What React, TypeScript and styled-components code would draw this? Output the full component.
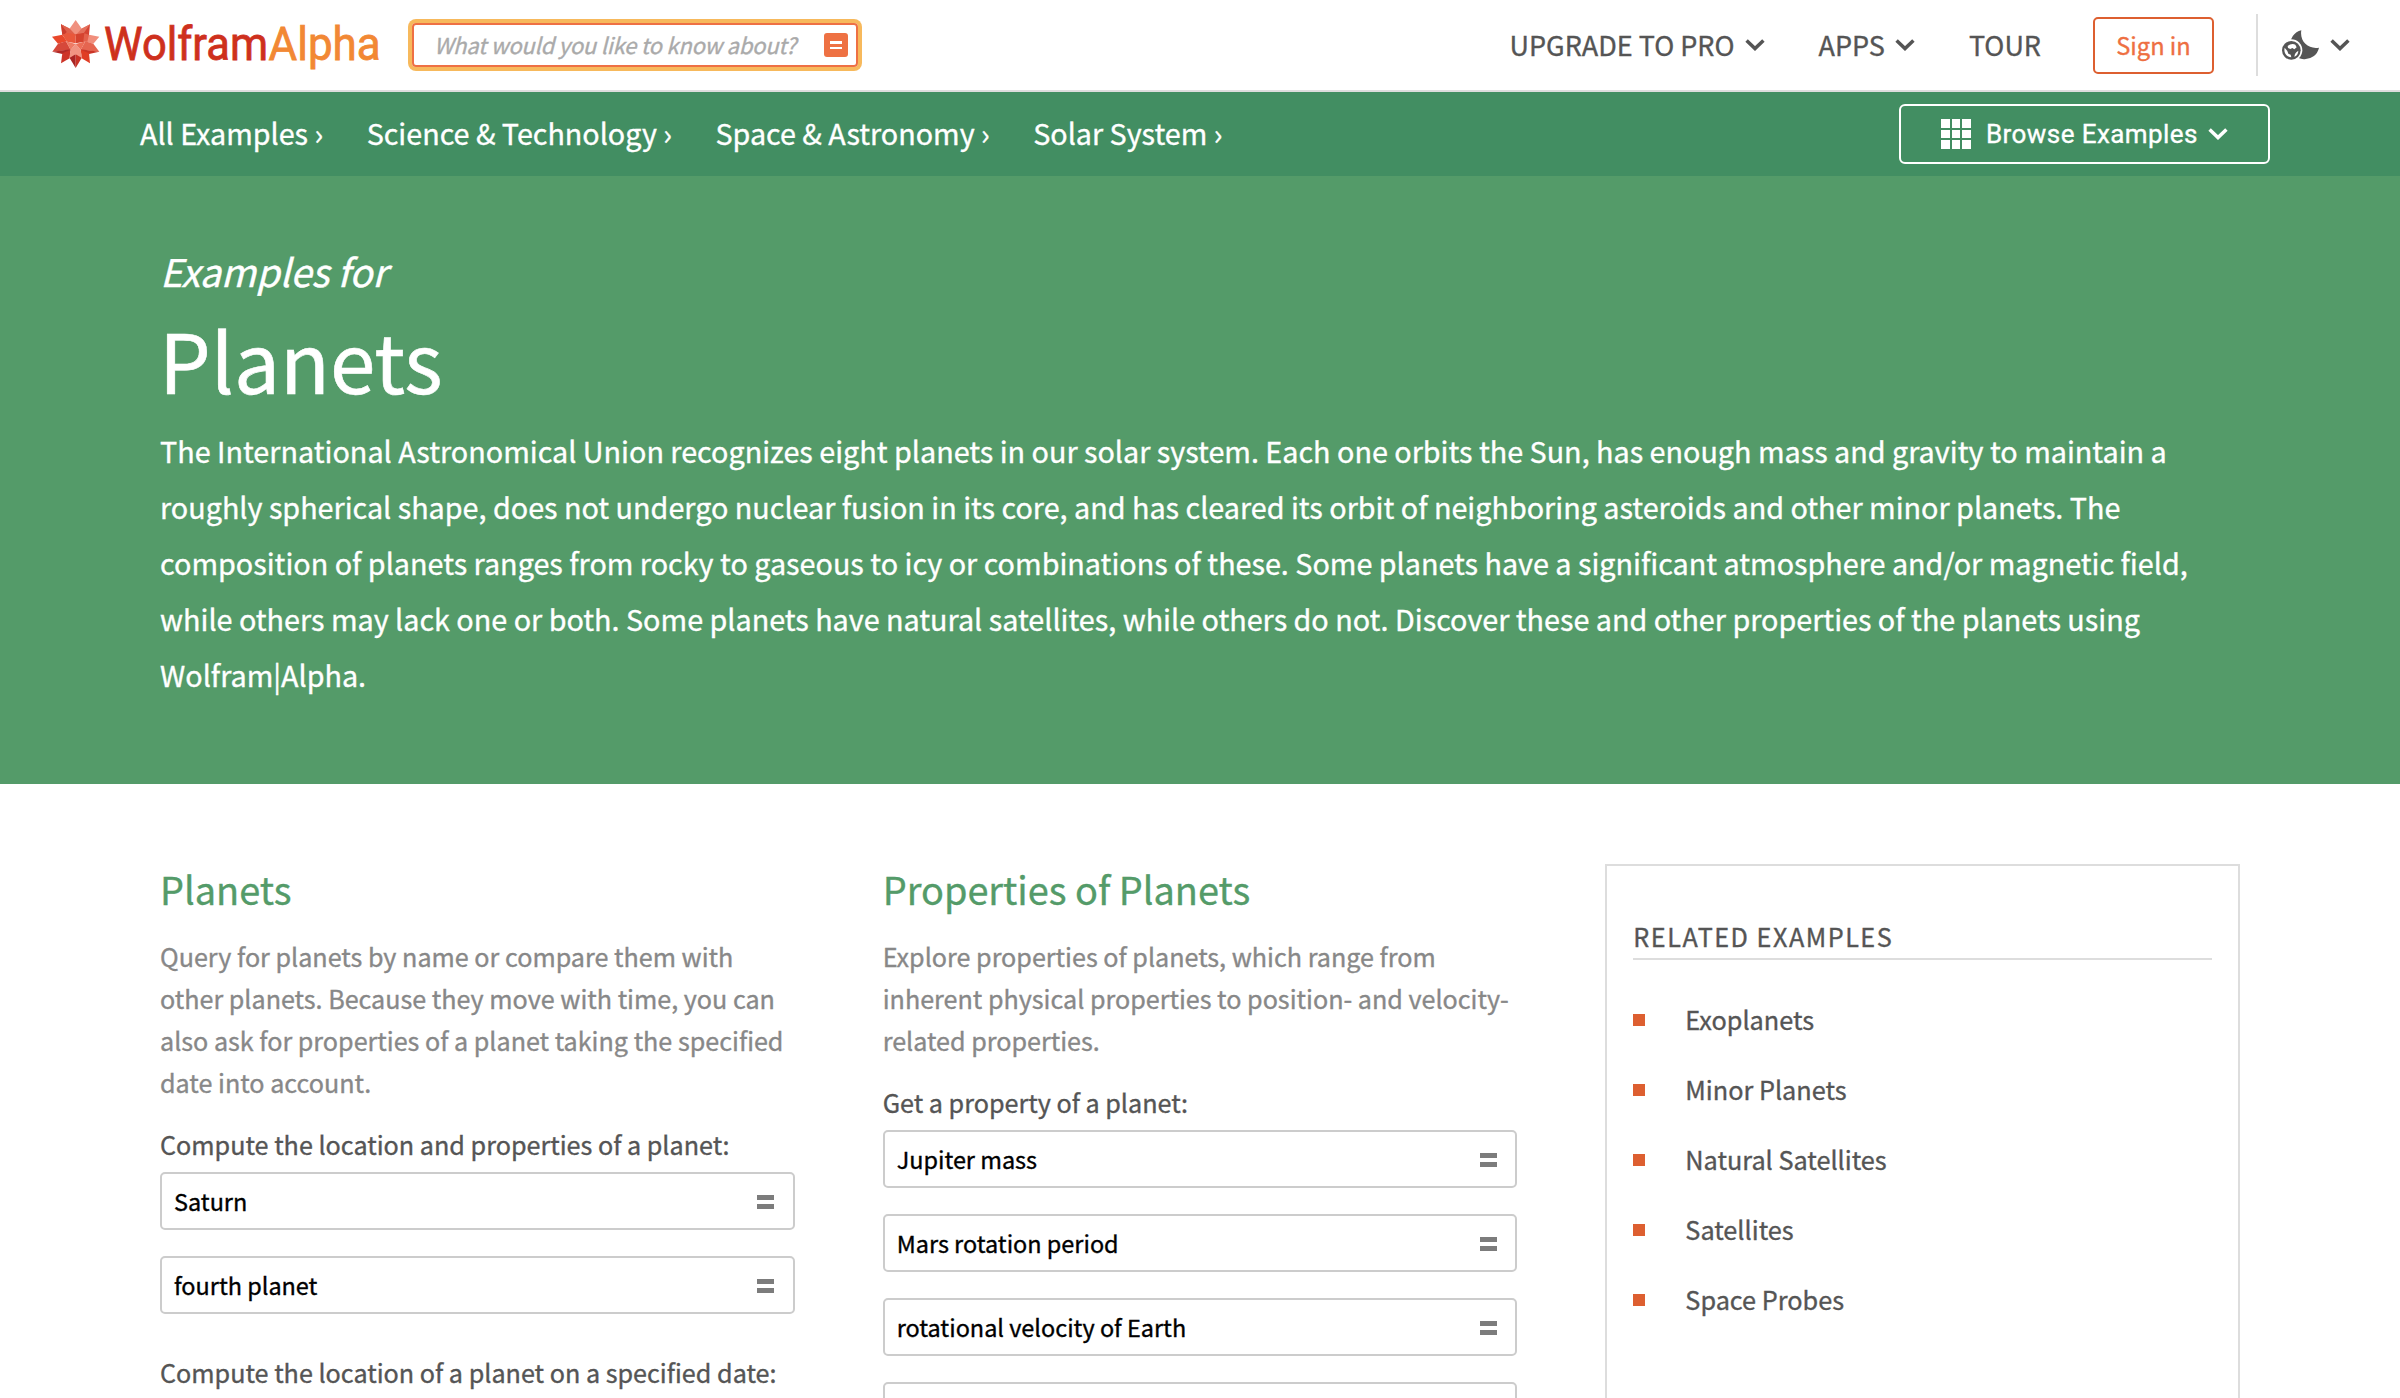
import React from 'react';
import styled, { createGlobalStyle } from 'styled-components';

const sans = '"Noto Sans CJK SC", "Noto Sans", sans-serif';

const GlobalStyle = createGlobalStyle`
  *, *::before, *::after { box-sizing: border-box; }
  body {
    margin: 0;
    background: #fff;
    font-family: ${sans};
    color: #555;
    -webkit-text-stroke: 0.35px currentColor;
  }
  h1, h2, h3, p, ul { margin: 0; padding: 0; font-weight: 400; }
`;

const Page = styled.div`
  display: flex;
  flex-direction: column;
  height: 1398px;
  overflow: hidden;
`;

/* ---------- top header ---------- */
const Header = styled.header`
  flex: none;
  display: flex;
  align-items: center;
  height: 92px;
  padding: 0 50px 0 52px;
  border-bottom: 2px solid #ddd;
`;

const LogoSvg = styled.svg`
  flex: none;
  display: block;
  margin-right: 20px;
`;

const LogoText = styled.text<{ $color: string }>`
  font-family: Roboto, sans-serif;
  font-size: 46px;
  fill: ${(p) => p.$color};
  stroke: ${(p) => p.$color};
  stroke-width: 0.8px;
`;

const SearchBox = styled.div`
  display: flex;
  align-items: center;
  justify-content: space-between;
  width: 446px;
  height: 44px;
  margin: 0 4px;
  padding: 0 8px 0 20px;
  border: 2px solid #ee7044;
  border-radius: 4px;
  box-shadow: 0 0 0 4px #f7b95c;
`;

const Placeholder = styled.span`
  padding-bottom: 2px;
  font-size: 22px;
  line-height: 36px;
  letter-spacing: -0.22px;
  font-style: italic;
  color: #aaa;
  white-space: nowrap;
`;

const Compute = styled.span`
  display: flex;
  flex-direction: column;
  justify-content: center;
  align-items: center;
  gap: 3px;
  width: 24px;
  height: 24px;
  border-radius: 3px;
  background: #ee7143;
`;

const ComputeBar = styled.i`
  width: 12px;
  height: 2.5px;
  background: #fff;
`;

const Nav = styled.nav`
  display: flex;
  align-items: center;
  margin-left: auto;
`;

const NavItem = styled.a<{ $after: number }>`
  display: flex;
  align-items: center;
  gap: 10px;
  margin-right: ${(p) => p.$after}px;
  font-size: 27px;
  line-height: 40px;
  white-space: nowrap;
`;

const NavLabel = styled.span`
  padding-bottom: 0.5px;
`;

const SignIn = styled.a`
  display: flex;
  align-items: center;
  justify-content: center;
  width: 121px;
  height: 57px;
  border: 2px solid #dd5f30;
  border-radius: 5px;
  font-size: 23.6px;
  color: #ee6f42;
`;

const Divider = styled.i`
  width: 2px;
  height: 62px;
  margin: 0 24px 0 42px;
  background: #ddd;
`;

const ThemeMenu = styled.div`
  display: flex;
  align-items: center;
  gap: 11px;
`;

/* ---------- breadcrumb bar ---------- */
const CrumbBar = styled.div`
  flex: none;
  display: flex;
  align-items: center;
  justify-content: space-between;
  height: 84px;
  padding: 0 130px 0 140px;
  background: #428e62;
  color: #fff;
`;

const Crumbs = styled.div`
  display: flex;
  gap: 43.5px;
  padding-bottom: 3px;
  font-size: 28.7px;
  line-height: 42px;
  white-space: nowrap;
`;

const BrowseButton = styled.a`
  display: flex;
  align-items: center;
  width: 371px;
  height: 60px;
  padding-left: 40px;
  border: 2px solid #fff;
  border-radius: 6px;
  font: 400 26px/36px Roboto, sans-serif;
  letter-spacing: 0.42px;
  white-space: nowrap;
`;

const BrowseLabel = styled.span`
  margin: 0 10px 0 15px;
`;

const TileGrid = styled.span`
  display: grid;
  grid-template-columns: repeat(3, 1fr);
  grid-template-rows: repeat(3, 1fr);
  gap: 2px;
  width: 30px;
  height: 30px;
`;

const Tile = styled.i`
  background: #fff;
`;

/* ---------- hero ---------- */
const Hero = styled.section`
  flex: none;
  height: 608px;
  padding: 67px 160px 0;
  background: #549b69;
  color: #fff;
`;

const Kicker = styled.p`
  font-size: 38.1px;
  line-height: 56px;
  font-style: italic;
  letter-spacing: -0.1px;
`;

const Title = styled.h1`
  margin: 10px 0 14px -1px;
  font-size: 81.8px;
  line-height: 100px;
  -webkit-text-stroke-width: 0.6px;
`;

const Lead = styled.p`
  max-width: 2060px;
  font-size: 28.74px;
  line-height: 56px;
`;

/* ---------- content ---------- */
const Main = styled.main`
  flex: 1;
  min-height: 0;
  display: grid;
  grid-template-columns: repeat(3, minmax(0, 1fr));
  grid-template-rows: 700px;
  column-gap: 88px;
  padding: 80px 160px 0;
`;

const Column = styled.section`
  display: flex;
  flex-direction: column;
`;

const Heading = styled.h2`
  margin: 1px 0 22px;
  font-size: 37.9px;
  line-height: 48px;
  color: #549b69;
`;

const Summary = styled.p`
  margin-bottom: 20px;
  font-size: 25.14px;
  line-height: 42px;
  color: #888;
`;

const Group = styled.div`
  display: flex;
  flex-direction: column;
  gap: 26px;
  margin-bottom: 37px;
`;

const GroupLabel = styled.h3`
  margin-bottom: -19px;
  font-size: 25.17px;
  line-height: 42px;
  white-space: nowrap;
`;

const Query = styled.a`
  display: flex;
  align-items: center;
  justify-content: space-between;
  height: 58px;
  padding: 0 18.5px 0 12px;
  border: 2px solid #ccc;
  border-radius: 5px;
  font-size: 23.45px;
  line-height: 36px;
  color: #000;
`;

const Equals = styled.i`
  width: 17px;
  height: 14px;
  margin-top: 2px;
  border: solid #7c7c7c;
  border-width: 5px 0;
`;

const Sidebar = styled.aside`
  padding: 49px 26px 0;
  border: 2px solid #ddd;
`;

const SidebarTitle = styled.h3`
  height: 45px;
  border-bottom: 2px solid #ddd;
  font-size: 25.2px;
  line-height: 42px;
  letter-spacing: 1.5px;
`;

const LinkList = styled.ul`
  display: flex;
  flex-direction: column;
  gap: 28px;
  padding-top: 38px;
  list-style: none;
`;

const LinkItem = styled.li`
  display: flex;
  align-items: center;
  gap: 40px;
  font-size: 25.25px;
  line-height: 42px;
`;

const Bullet = styled.i`
  width: 12px;
  height: 12px;
  margin-top: 2px;
  background: #dd5f30;
`;

const Chevron = () => (
  <svg width="20" height="12" viewBox="0 0 20 12">
    <path d="M1.6 1.6 L10 9.6 L18.4 1.6" fill="none" stroke="currentColor" strokeWidth="3.5" />
  </svg>
);

const facets: [string, string][] = [
  ['137,60 156,87 137,108 118,87', '#f0917f'],
  ['93,73 118,87 133,104 97,105', '#e0604b'],
  ['93,73 97,105 105,102 118,87', '#cb3c2c'],
  ['93,73 118,85 137,105 113,100', '#df5f4a'],
  ['180,73 156,87 141,104 177,105', '#d54433'],
  ['180,73 156,85 137,105 161,100', '#e4705c'],
  ['66,110 97,104 111,124 84,131', '#e9482b'],
  ['208,110 177,104 163,124 190,131', '#f18e7c'],
  ['97,104 113,99 137,103 137,130 111,125', '#e9573b'],
  ['177,104 161,99 137,103 137,130 163,125', '#d5432f'],
  ['163,100 177,104 172,125 160,124', '#e4614c'],
  ['67,155 84,131 108,124 122,149', '#d6483a'],
  ['67,155 122,148 118,160 97,162', '#b12a27'],
  ['208,155 190,131 166,124 152,149', '#e56550'],
  ['208,155 152,148 156,160 177,162', '#cb3526'],
  ['93,190 97,160 122,149 119,175', '#cd3428'],
  ['180,190 177,160 152,149 155,175', '#e03d24'],
  ['137,204 119,174 122,160 137,163', '#a92524'],
  ['137,204 155,174 152,160 137,163', '#c93226'],
  ['108,124 137,132 122,150', '#ee7b65'],
  ['166,124 137,132 152,150', '#ec6e57'],
  ['137,131 152,149 156,174 137,163 118,174 122,149', '#f19482'],
];

const Logo = () => (
  <LogoSvg width="336" height="90" viewBox="52 0 336 90">
    <g transform="translate(30 0) scale(0.33333)">
      {facets.map(([points, fill], i) => (
        <polygon key={i} points={points} fill={fill} />
      ))}
    </g>
    <LogoText $color="#ce301d" x="104" y="60.4" textLength="164" lengthAdjust="spacingAndGlyphs">Wolfram</LogoText>
    <LogoText $color="#f28834" x="268.6" y="60.4" textLength="112" lengthAdjust="spacingAndGlyphs">Alpha</LogoText>
  </LogoSvg>
);

const NightIcon = () => (
  <svg width="37" height="30" viewBox="904 89 111 90">
    <path d="M962 90 A44 44 0 1 0 1015 142 C984 148 956 124 962 90 Z" fill="#555" />
    <circle cx="932" cy="150" r="33" fill="#fff" />
    <circle cx="932" cy="150" r="28" fill="#555" />
    <path d="M912 142 C908 158 918 170 932 171 L930 163 L923 160 L920 152 Z" fill="#fff" />
    <path d="M921 137 C928 130 938 129 944 133 L948 141 L941 147 L935 143 L929 146 L922 143 Z" fill="#fff" />
    <path d="M953 151 C953 160 948 167 941 169 L943 161 L947 156 Z" fill="#fff" />
  </svg>
);

const crumbs = ['All Examples ›', 'Science & Technology ›', 'Space & Astronomy ›', 'Solar System ›'];
const related = ['Exoplanets', 'Minor Planets', 'Natural Satellites', 'Satellites', 'Space Probes'];

const QueryGroup = ({ label, queries }: { label: string; queries: string[] }) => (
  <Group>
    <GroupLabel>{label}</GroupLabel>
    {queries.map((q) => (
      <Query key={q}>
        <span>{q}</span>
        <Equals />
      </Query>
    ))}
  </Group>
);

export default function App() {
  return (
    <Page>
      <GlobalStyle />
      <Header>
        <Logo />
        <SearchBox>
          <Placeholder>What would you like to know about?</Placeholder>
          <Compute>
            <ComputeBar />
            <ComputeBar />
          </Compute>
        </SearchBox>
        <Nav>
          <NavItem $after={54}>
            <NavLabel>UPGRADE TO PRO</NavLabel>
            <Chevron />
          </NavItem>
          <NavItem $after={54}>
            <NavLabel>APPS</NavLabel>
            <Chevron />
          </NavItem>
          <NavItem $after={52}>
            <NavLabel>TOUR</NavLabel>
          </NavItem>
          <SignIn>Sign in</SignIn>
          <Divider />
          <ThemeMenu>
            <NightIcon />
            <Chevron />
          </ThemeMenu>
        </Nav>
      </Header>

      <CrumbBar>
        <Crumbs>
          {crumbs.map((c) => (
            <span key={c}>{c}</span>
          ))}
        </Crumbs>
        <BrowseButton>
          <TileGrid>
            {Array.from({ length: 9 }, (_, i) => (
              <Tile key={i} />
            ))}
          </TileGrid>
          <BrowseLabel>Browse Examples</BrowseLabel>
          <Chevron />
        </BrowseButton>
      </CrumbBar>

      <Hero>
        <Kicker>Examples for</Kicker>
        <Title>Planets</Title>
        <Lead>
          The International Astronomical Union recognizes eight planets in our solar system. Each one orbits the Sun,
          has enough mass and gravity to maintain a roughly spherical shape, does not undergo nuclear fusion in its
          core, and has cleared its orbit of neighboring asteroids and other minor planets. The composition of planets
          ranges from rocky to gaseous to icy or combinations of these. Some planets have a significant atmosphere
          and/or magnetic field, while others may lack one or both. Some planets have natural satellites, while others
          do not. Discover these and other properties of the planets using Wolfram|Alpha.
        </Lead>
      </Hero>

      <Main>
        <Column>
          <Heading>Planets</Heading>
          <Summary>
            Query for planets by name or compare them with other planets. Because they move with time, you can also ask
            for properties of a planet taking the specified date into account.
          </Summary>
          <QueryGroup label="Compute the location and properties of a planet:" queries={['Saturn', 'fourth planet']} />
          <QueryGroup label="Compute the location of a planet on a specified date:" queries={[]} />
        </Column>
        <Column>
          <Heading>Properties of Planets</Heading>
          <Summary>
            Explore properties of planets, which range from inherent physical properties to position- and
            velocity-related properties.
          </Summary>
          <QueryGroup
            label="Get a property of a planet:"
            queries={['Jupiter mass', 'Mars rotation period', 'rotational velocity of Earth', '']}
          />
        </Column>
        <Sidebar>
          <SidebarTitle>RELATED EXAMPLES</SidebarTitle>
          <LinkList>
            {related.map((r) => (
              <LinkItem key={r}>
                <Bullet />
                {r}
              </LinkItem>
            ))}
          </LinkList>
        </Sidebar>
      </Main>
    </Page>
  );
}
